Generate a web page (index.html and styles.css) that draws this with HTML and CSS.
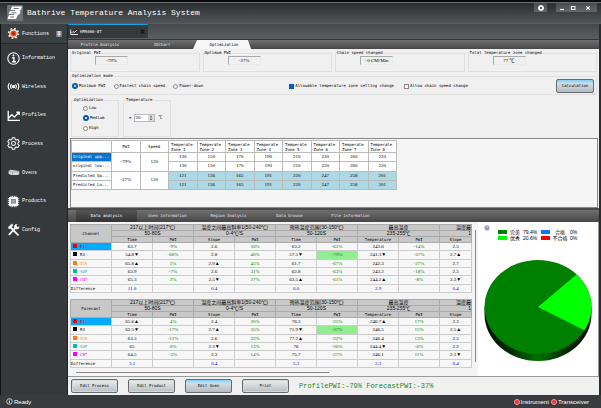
FILE: index.html
```html
<!DOCTYPE html>
<html lang="en">
<head>
  <meta charset="UTF-8">
  <meta name="viewport" content="width=device-width, initial-scale=1.0">
  <title>Bathrive Temperature Analysis System</title>
  <link rel="stylesheet" href="styles.css">
</head>
<body>
  <header class="titlebar">
    <svg class="logo" viewBox="0 0 16 16">
      <rect width="16" height="16" rx="1" fill="#6d7174"/>
      <path d="M5 1.500h10l-1 3.500h-1l-.5 1.500h1l-1 3h-1.500l-2 4.500H.5l1.500-4h5l.5-1H1.500L3 6h5l.5-1h-5z" fill="#fff"/>
      <path d="M6.500 3.500h5M4.500 7.800h5M3 12h4" stroke="#6b6f72" stroke-width="1"/>
    </svg>
    <h1>Bathrive Temperature Analysis System</h1>
    <div class="window-buttons">
      <button class="win settings" aria-label="Settings"><svg viewBox="0 0 8 8"><circle cx="4" cy="4" r="2" fill="none" stroke="#fff" stroke-width="1.6"/><path d="M4 1v6M1 4h6" stroke="#fff" stroke-width="1" stroke-dasharray="1 4"/></svg></button>
      <button class="win" aria-label="Minimize"><svg viewBox="0 0 8 8"><path d="M2 5.5h4" stroke="#fff" stroke-width="1.2"/></svg></button>
      <button class="win" aria-label="Maximize"><svg viewBox="0 0 8 8"><rect x="2.3" y="2.5" width="3.6" height="3" fill="none" stroke="#fff"/></svg></button>
      <button class="win close" aria-label="Close"><svg viewBox="0 0 8 8"><path d="M2.3 2.3l3.4 3.4M5.7 2.3L2.3 5.7" stroke="#fff" stroke-width="1.1"/></svg></button>
    </div>
  </header>

  <div class="workspace">
    <aside class="sidebar">
      <div class="functions">
        <svg class="icon" viewBox="0 0 16 16">
          <circle cx="8" cy="8" r="4.500" fill="#e8531c" stroke="#f3e6dc" stroke-width="1.500"/>
          <circle cx="8" cy="8" r="6" fill="none" stroke="#f3e6dc" stroke-width="2" stroke-dasharray="2.2 2.5"/>
          <circle cx="8" cy="8" r="2" fill="#b52b0c"/>
        </svg>
        <span>Functions</span>
        <button class="pin" aria-label="Pin"><svg viewBox="0 0 8 8"><path d="M2 1h4M3 1v3M5 1v3M1.500 4.500h5M4 4.500V8" fill="none" stroke="#fff" stroke-width="1.100"/></svg></button>
      </div>
      <nav class="menu">
        <a href="#information">
          <svg class="icon" viewBox="0 0 16 16" fill="none" stroke="#fff"><circle cx="8" cy="8" r="7" stroke-width="1.3"/><path d="M6.5 7H8.5V12M6 12h5" stroke-width="1.7"/><circle cx="8" cy="4.2" r="1.2" fill="#fff" stroke="none"/></svg>
          Information</a>
        <a href="#wireless">
          <svg class="icon" viewBox="0 0 16 16" fill="none" stroke="#fff" stroke-width="1.4"><circle cx="8" cy="8" r="1.4" fill="#fff"/><path d="M5.6 5.3a4 4 0 0 0 0 5.4M10.4 5.3a4 4 0 0 1 0 5.4M3 3.8a7 7 0 0 0 0 8.4M13 3.8a7 7 0 0 1 0 8.4"/></svg>
          Wireless</a>
        <a href="#profiles">
          <svg class="icon" viewBox="0 0 16 16" fill="none" stroke="#fff" stroke-width="1.6"><path d="M1.5 2v12H16M2 11l4-4 3 3 6-6M11.5 4H15v3.500"/></svg>
          Profiles</a>
        <a href="#process">
          <svg class="icon" viewBox="0 0 16 16" fill="none" stroke="#fff" stroke-width="1.3" stroke-linejoin="round"><path d="M6.500 1h3l.5 2 1.500.8 2-.6 1.500 2.600-1.500 1.400v1.600l1.500 1.400-1.500 2.600-2-.6-1.500.8-.5 2h-3L6 13l-1.500-.8-2 .6L1 10.200l1.500-1.400V7.200L1 5.800l1.500-2.600 2 .6L6 3z"/><circle cx="8" cy="8" r="2.400"/></svg>
          Process</a>
        <a href="#ovens">
          <svg class="icon" viewBox="0 0 16 16"><path d="M2 6l2-1.500 11 1.500v4l-2 1L5 11 2 9.500z" fill="#d9dadb"/><path d="M2 6.500l5 1v3.500M7 7.500l8-.5" fill="none" stroke="#8b8f91" stroke-width=".8"/></svg>
          Ovens</a>
        <a href="#products">
          <svg class="icon" viewBox="0 0 16 16" stroke="#fff"><path d="M5 1v14M7 1v14M9 1v14M11 1v14M1 4.500h14M1 7h14M1 9.500h14M1 12h14" stroke-width="1"/><rect x="3" y="3" width="10" height="10" fill="#fff"/><rect x="5.500" y="5.500" width="5" height="4.500" fill="#aaa" stroke="#777"/></svg>
          Products</a>
        <a href="#config">
          <svg class="icon" viewBox="0 0 16 16" fill="none" stroke="#fff" stroke-linecap="round"><path d="M5 6l8.500 8.500M11 5L3 14" stroke-width="2.200"/><path d="M1.500 5.500L5.500 1.500l2 1L4 7z" fill="#fff" stroke-width=".8"/><path d="M12 1.500a3 3 0 1 0 3 3l-2 .8-1.500-1.500z" fill="#fff" stroke-width=".6"/></svg>
          Config</a>
      </nav>
    </aside>

    <main class="document">
      <div class="doc-tabs">
        <div class="doc-tab">
          <svg viewBox="0 0 16 12" fill="none" stroke="#fff" stroke-width="1.800"><path d="M1.500 1v10H16M3 8l3-3 3 2 5-5"/></svg>
          <span>HM5060-8T</span>
          <button class="tab-close" aria-label="Close tab"><svg viewBox="0 0 8 8"><path d="M2 2l4 4M6 2L2 6" stroke="#111" stroke-width="1.400"/></svg></button>
        </div>
      </div>

      <div class="tabs top-tabs">
        <button>Profile Analysis</button>
        <button>3DChart</button>
        <button class="active">Optimization</button>
      </div>

      <section class="settings-panel">
        <div class="summary">
          <fieldset><legend>Original PWI</legend><output>-79%</output></fieldset>
          <fieldset><legend>Optimum PWI</legend><output>-37%</output></fieldset>
          <fieldset><legend>Chain speed changed</legend><output>+0 CM/Min</output></fieldset>
          <fieldset><legend>Total temperature zone changed</legend><output>77 ℃</output></fieldset>
        </div>

        <fieldset class="mode">
          <legend>Optimization mode</legend>
          <div class="mode-row">
            <div class="mode-radios">
              <label><input type="radio" name="mode" checked>Minimum PWI</label>
              <label><input type="radio" name="mode">Fastest chain speed</label>
              <label><input type="radio" name="mode">Power-down</label>
            </div>
            <div class="mode-checks">
              <label><input type="checkbox" checked>Allowable temperature zone setting change</label>
              <label><input type="checkbox">Allow chain speed change</label>
            </div>
            <button class="btn lit">Calculation</button>
          </div>
        </fieldset>

        <div class="options">
          <fieldset class="level">
            <legend>Optimization</legend>
            <label><input type="radio" name="level">Low</label>
            <label><input type="radio" name="level" checked>Medium</label>
            <label><input type="radio" name="level">High</label>
          </fieldset>
          <fieldset class="temperature">
            <legend>Temperature</legend>
            <label>± <span class="spin"><input type="text" value="20"><svg viewBox="0 0 6 8"><path d="M3 1l1.800 2H1.200zM3 7l1.800-2H1.200z" fill="#444"/></svg></span> ℃</label>
          </fieldset>
        </div>
      </section>

      <section class="zones-panel">
        <table class="zones">
          <colgroup><col class="name-col"></colgroup>
          <thead>
            <tr><th></th><th class="mid">PWI</th><th class="mid">Speed</th><th>Temperate Zone 1</th><th>Temperate Zone 2</th><th>Temperate Zone 3</th><th>Temperate Zone 4</th><th>Temperate Zone 5</th><th>Temperate Zone 6</th><th>Temperate Zone 7</th><th>Temperate Zone 8</th></tr>
          </thead>
          <tbody>
            <tr><th class="selected">Original upp...</th><td rowspan="2">-79%</td><td rowspan="2">120</td><td>130</td><td>150</td><td>170</td><td>190</td><td>210</td><td>230</td><td>260</td><td>220</td></tr>
            <tr><th>original low...</th><td>130</td><td>150</td><td>170</td><td>190</td><td>210</td><td>230</td><td>260</td><td>220</td></tr>
            <tr class="predicted"><th>Predicted Up...</th><td rowspan="2" class="plain">-37%</td><td rowspan="2" class="plain">120</td><td>121</td><td>136</td><td>165</td><td>191</td><td>220</td><td>247</td><td>258</td><td>201</td></tr>
            <tr class="predicted"><th>Predicted Lo...</th><td>121</td><td>136</td><td>165</td><td>191</td><td>220</td><td>247</td><td>258</td><td>201</td></tr>
          </tbody>
        </table>
      </section>

      <div class="tabs bottom-tabs">
        <button class="active">Data analysis</button>
        <button>Oven information</button>
        <button>Region Analysis</button>
        <button>Data browse</button>
        <button>File information</button>
      </div>

      <section class="results">
        <div class="tables">
          <div class="table-list">
            <table class="data">
              <colgroup><col span="9" class="value-col"><col></colgroup>
              <thead>
                <tr class="zh"><th rowspan="3" class="corner">Channel</th><th colspan="2">217以上时间(217℃)</th><th colspan="2">温度之间最高斜率1(50-240℃)</th><th colspan="2">预热温度范围(30-150℃)</th><th colspan="2">最高温度</th><th class="last">温度最</th></tr>
                <tr class="zh"><th colspan="2">50-80S</th><th colspan="2">0-4℃/S</th><th colspan="2">50-120S</th><th colspan="2">235-255℃</th><th class="last">1</th></tr>
                <tr><th>Time</th><th>PWI</th><th>Slope</th><th>PWI</th><th>Time</th><th>PWI</th><th>Temperature</th><th>PWI</th><th>Slope</th></tr>
              </thead>
              <tbody>
                <tr><th class="ch red current">B1</th><td>63.7</td><td class="pwi">-9%</td><td>2.6</td><td class="pwi">30%</td><td>63.2</td><td class="pwi">-62%</td><td>243.6</td><td class="pwi">-14%</td><td>2.5</td></tr>
                <tr><th class="ch black">R3</th><td>54.8▼</td><td class="pwi">-68%</td><td>2.8</td><td class="pwi">40%</td><td>57.5▼</td><td class="pwi best">-79%</td><td>241.3▼</td><td class="pwi">-37%</td><td>2.7▲</td></tr>
                <tr><th class="ch orange">IC5</th><td>65.8▲</td><td class="pwi">5%</td><td>2.9▲</td><td class="pwi">45%</td><td>61.7</td><td class="pwi">-67%</td><td>242.3</td><td class="pwi">-27%</td><td>2.7</td></tr>
                <tr><th class="ch teal">SOP</th><td>63.9</td><td class="pwi">-7%</td><td>2.6</td><td class="pwi">31%</td><td>62.8</td><td class="pwi">-63%</td><td>243.2</td><td class="pwi">-18%</td><td>2.5</td></tr>
                <tr><th class="ch magenta">CN7</th><td>65.3</td><td class="pwi">2%</td><td>2.5▼</td><td class="pwi">27%</td><td>63.5▲</td><td class="pwi">-61%</td><td>244.2▲</td><td class="pwi">-8%</td><td>2.3▼</td></tr>
                <tr class="diff"><th>Difference</th><td>11.0</td><td></td><td>0.4</td><td></td><td>6.0</td><td></td><td>2.9</td><td></td><td>0.4</td></tr>
              </tbody>
            </table>
            <table class="data">
              <colgroup><col span="9" class="value-col"><col></colgroup>
              <thead>
                <tr class="zh"><th rowspan="3" class="corner">Forecast</th><th colspan="2">217以上时间(217℃)</th><th colspan="2">温度之间最高斜率1(50-240℃)</th><th colspan="2">预热温度范围(30-150℃)</th><th colspan="2">最高温度</th><th class="last">温度最</th></tr>
                <tr class="zh"><th colspan="2">50-80S</th><th colspan="2">0-4℃/S</th><th colspan="2">50-120S</th><th colspan="2">235-255℃</th><th class="last">1</th></tr>
                <tr><th>Time</th><th>PWI</th><th>Slope</th><th>PWI</th><th>Time</th><th>PWI</th><th>Temperature</th><th>PWI</th><th>Slope</th></tr>
              </thead>
              <tbody>
                <tr><th class="ch red current">B1</th><td>65.6▲</td><td class="pwi">4%</td><td>2.4</td><td class="pwi">20%</td><td>76.3</td><td class="pwi">-25%</td><td>246.7▲</td><td class="pwi">17%</td><td>2.3</td></tr>
                <tr><th class="ch black">R3</th><td>62.5▼</td><td class="pwi">-17%</td><td>2.7▲</td><td class="pwi">35%</td><td>71.9▼</td><td class="pwi best">-37%</td><td>246.5</td><td class="pwi">15%</td><td>2.5▲</td></tr>
                <tr><th class="ch orange">IC5</th><td>63.3</td><td class="pwi">-11%</td><td>2.6</td><td class="pwi">32%</td><td>77.2▲</td><td class="pwi">-22%</td><td>246.4</td><td class="pwi">13%</td><td>2.5</td></tr>
                <tr><th class="ch teal">SOP</th><td>65</td><td class="pwi">0%</td><td>2.3▼</td><td class="pwi">13%</td><td>76</td><td class="pwi">-26%</td><td>244.4▼</td><td class="pwi">-6%</td><td>2.2</td></tr>
                <tr><th class="ch magenta">CN7</th><td>64.5</td><td class="pwi">-3%</td><td>2.3</td><td class="pwi">14%</td><td>75.7</td><td class="pwi">-27%</td><td>246.1</td><td class="pwi">11%</td><td>2.1▼</td></tr>
                <tr class="diff"><th>Difference</th><td>3.1</td><td></td><td>0.4</td><td></td><td>5.3</td><td></td><td>2.3</td><td></td><td>0.4</td></tr>
              </tbody>
            </table>
            <div class="hscroll"></div>
          </div>
          <div class="vscroll"></div>
        </div>

        <div class="chart">
          <div class="chart-head">
            <svg class="chart-tool" viewBox="0 0 8 8"><circle cx="4" cy="4" r="3" fill="#c4c8d8" stroke="#777d99"/><path d="M2.500 3.500L4 5l1.500-1.500" fill="none" stroke="#445"/></svg>
            <ul class="legend">
              <li><i class="excellent"></i><span>完美</span><b>79.4%</b></li>
              <li><i class="pass"></i><span>合格</span><b>0%</b></li>
              <li><i class="good"></i><span>优秀</span><b>20.6%</b></li>
              <li><i class="fail"></i><span>不合格</span><b>0%</b></li>
            </ul>
          </div>
          <svg class="pie" viewBox="0 0 108 102">
            <defs>
              <linearGradient id="side">
                <stop offset="0" stop-color="#001000"/>
                <stop offset=".25" stop-color="#012c01"/>
                <stop offset=".5" stop-color="#007000"/>
                <stop offset=".75" stop-color="#012c01"/>
                <stop offset="1" stop-color="#001000"/>
              </linearGradient>
            </defs>
            <path d="M.5 47v7a53.500 47 0 0 0 107 0v-7z" fill="url(#side)"/>
            <ellipse cx="54" cy="47" rx="53.500" ry="47" fill="#008000"/>
            <path d="M54 47L92.500 14.500A53.500 47 0 0 1 100.500 70.300z" fill="#0f0"/>
          </svg>
        </div>
      </section>

      <footer class="actions">
        <button class="btn">Edit Process</button>
        <button class="btn">Edit Product</button>
        <button class="btn lit">Edit Oven</button>
        <button class="btn">Print</button>
        <p>ProfilePWI:-79% ForecastPWI:-37%</p>
      </footer>
    </main>
  </div>

  <div class="statusbar">
    <span class="ready"><svg viewBox="0 0 8 8"><circle cx="4" cy="4" r="3.200" fill="none" stroke="#fff" stroke-width=".8"/><path d="M4 3.500V6M4 2v.8" stroke="#fff"/></svg>Ready</span>
    <span class="device"><i></i>Instrument</span>
    <span class="device"><i></i>Transceiver</span>
  </div>
</body>
</html>
```
FILE: styles.css
```css
* {
  box-sizing: border-box;
}

body {
  margin: 0;
  min-height: 100vh;
  display: flex;
  flex-direction: column;
  background: #3a3b3f;
  border-top: 2px solid #0b0b0b;
  font-family: "DejaVu Sans Mono", "Noto Sans CJK SC", monospace;
  font-size: 4px;
  line-height: 6px;
  color: #000;
}

button,
input,
output {
  font: inherit;
  color: inherit;
}

button {
  border: none;
  padding: 0;
  background: none;
}

svg {
  display: block;
}

/* title bar */
.titlebar {
  display: flex;
  align-items: center;
  height: 22px;
  padding-left: 7px;
  background: linear-gradient(#2a2d2f, #50565a);
  border-top: 1px solid #6b6e70;
  border-bottom: 1px solid #1c6f96;
}

.logo {
  width: 16px;
  height: 16px;
}

.titlebar h1 {
  margin: 0 0 0 4px;
  font-family: "Liberation Mono", monospace;
  font-size: 8px;
  line-height: 12px;
  font-weight: normal;
  color: #fff;
}

.window-buttons {
  display: flex;
  align-self: flex-start;
  margin: 0 4px 0 auto;
}

.win {
  width: 11px;
  height: 9px;
  display: flex;
  align-items: center;
  justify-content: center;
  background: linear-gradient(#4a4a4b, #666);
}

.win svg {
  width: 8px;
  height: 8px;
}

.win.settings {
  width: 13px;
  margin-right: 9px;
}

.win.close {
  width: 19px;
}

.workspace {
  flex: 1;
  display: flex;
}

/* sidebar */
.sidebar {
  flex: 0 0 68px;
  border-left: 1px solid #111;
  border-right: 1px solid #222;
  background: #35393c;
  color: #fff;
  font-family: "Liberation Mono", monospace;
  font-size: 5px;
}

.functions {
  display: flex;
  align-items: center;
  height: 20px;
  padding: 0 5px 0 6px;
  gap: 2px;
  background: #3a3f42;
  border-bottom: 1px solid #26292b;
}

.icon {
  width: 13px;
  height: 13px;
}

.pin {
  width: 6px;
  height: 6px;
  margin-left: auto;
  background: #777;
}

.menu {
  display: grid;
  grid-template-rows: repeat(7, 1fr);
  height: 200px;
}

.menu a {
  display: flex;
  align-items: center;
  gap: 2px;
  padding-left: 6px;
  color: #fff;
  text-decoration: none;
}

/* document area */
.document {
  flex: 1;
  min-width: 0;
  display: flex;
  flex-direction: column;
  border-right: 2px solid #2b2c30;
  background: #f0f0f0;
}

.doc-tabs {
  height: 16px;
  background: linear-gradient(#45494c, #5a5f62);
  border-bottom: 1px solid #333;
}

.doc-tab {
  display: flex;
  align-items: center;
  gap: 2px;
  width: 80px;
  height: 14px;
  padding: 0 2px;
  background: #35393c;
  border-top: 1px solid #13a0e0;
  color: #fff;
}

.doc-tab > svg {
  width: 8px;
  height: 6px;
}

.tab-close {
  margin-left: auto;
}

.tab-close svg {
  width: 7px;
  height: 7px;
}

.tabs {
  display: flex;
  background: linear-gradient(#707070, #464646);
  color: #e4e4e4;
}

.top-tabs {
  height: 9px;
  padding-left: 1px;
}

.top-tabs button {
  flex: 0 0 62px;
}

.top-tabs .active {
  color: #000;
  background: #f6f6f6;
  clip-path: polygon(4px 0, 55px 0, 58px 100%, 0 100%);
}

.settings-panel {
  padding: 1px 2px 1px;
}

fieldset {
  min-width: 0;
  margin: 0;
  padding: 0;
  border: 1px solid #e0e0e0;
}

legend {
  margin-left: 1px;
  padding: 0;
}

.summary {
  display: grid;
  grid-template-columns: repeat(4, 1fr);
  gap: 3px;
}

.summary fieldset {
  height: 22px;
}

.summary output {
  display: block;
  width: 33px;
  height: 9px;
  margin-left: 24px;
  line-height: 8px;
  text-align: center;
  border: 1px solid #e8e8e8;
  border-top-color: #aaa;
  border-left-color: #aaa;
}

.mode {
  margin-top: 1px;
  height: 22px;
}

.mode-row {
  display: flex;
  align-items: center;
}

label {
  display: flex;
  align-items: center;
  gap: 1px;
  white-space: nowrap;
}

input[type="radio"],
input[type="checkbox"] {
  appearance: none;
  flex: none;
  width: 5px;
  height: 5px;
  margin: 0;
  background: #fff;
  border: 1px solid #888;
}

input[type="radio"] {
  border-radius: 50%;
}

input[type="radio"]:checked {
  width: 6px;
  height: 6px;
  border: 2px solid #0058b8;
}

input[type="checkbox"]:checked {
  background: #0a62c4;
  border-color: #0058b8;
}

.mode-radios {
  display: flex;
  gap: 8px;
  padding-left: 1px;
  flex: 0 0 41%;
}

.mode-checks {
  display: flex;
  gap: 10px;
  padding-left: 3px;
}

.btn {
  border: 1px solid #666b70;
  border-radius: 2px;
  background: linear-gradient(#eceeef, #b9bec2);
  box-shadow: inset 0 0 0 1px #d4d8db;
}

.btn.lit {
  background: linear-gradient(#7fd0f8, #d4dde2 30%, #b4bcc1);
  box-shadow: none;
}

.mode .btn {
  width: 38px;
  height: 14px;
  margin-left: auto;
  margin-right: 2px;
}

.options {
  display: flex;
  gap: 4px;
  margin-top: 2px;
  padding-left: 1px;
}

.options fieldset {
  width: 48px;
  height: 40px;
}

.options legend {
  margin-left: 2px;
}

.level label {
  height: 10px;
  padding-left: 11px;
}

.temperature label {
  gap: 3px;
  height: 30px;
  padding-left: 5px;
}

.spin {
  display: flex;
  align-items: center;
  width: 21px;
  height: 8px;
  background: #fff;
  border: 1px solid #bbb;
}

.spin input {
  flex: 1;
  min-width: 0;
  padding: 0;
  height: 6px;
  border: none;
  background: none;
}

.spin svg {
  width: 6px;
  height: 6px;
  background: #ddd;
}

/* oven zones */
.zones-panel {
  height: 70px;
  margin: 0 1px 0 2px;
  padding-top: 1px;
  background: #f5f5f5;
  border: 1px solid #888;
}

table {
  table-layout: fixed;
  border-collapse: collapse;
}

th,
td {
  padding: 0;
  font-weight: normal;
  text-align: center;
  white-space: nowrap;
}

td,
output,
.spin input {
  font-family: "Liberation Serif", "Noto Sans CJK SC", serif;
  font-size: 5px;
}

.zones {
  width: 62%;
  height: 50px;
  background: #fff;
}

.name-col {
  width: 40px;
}

.zones td,
.zones th {
  border: 1px solid #bbb;
}

.zones thead th {
  height: 12px;
  padding: 0 2px;
  line-height: 5px;
  text-align: left;
  white-space: normal;
}

.zones thead .mid {
  text-align: center;
}

.zones tbody th {
  padding-left: 1px;
  text-align: left;
}

.zones .selected {
  background: #0872cf;
  color: #fff;
}

.predicted td {
  background: #add8e6;
}

.predicted .plain {
  background: #fff;
}

/* lower tabs and results */
.bottom-tabs {
  height: 14px;
  padding-left: 8px;
  border-top: 2px solid #4a4a4a;
}

.bottom-tabs button {
  flex: 0 0 61px;
}

.bottom-tabs .active {
  color: #fff;
  background: linear-gradient(#555, #333);
}

.results {
  display: flex;
  border-bottom: 1px solid #999;
  background: #f4f4f4;
}

.tables {
  flex: 1;
  min-width: 0;
  display: flex;
  padding: 2px;
  gap: 3px;
}

.table-list {
  flex: 1;
  min-width: 0;
}

.data {
  width: 100%;
  height: 69px;
  margin-bottom: 6px;
  background: #f7f7f7;
  border: 1px solid #999;
}

.value-col {
  width: 41px;
}

.data th,
.data td {
  border: 1px solid #ccc;
  line-height: 5px;
}

.data thead th {
  background: #c8c8c8;
  border-color: #aaa;
}

.data .zh th:not(.corner) {
  font-family: "Liberation Sans", "Noto Sans CJK SC", sans-serif;
  font-size: 5px;
}

.data .zh .last {
  text-align: right;
}

.data tbody th {
  text-align: left;
}

.data .ch::before {
  content: "";
  display: inline-block;
  width: 4px;
  height: 4px;
  margin: 0 3px 0 2px;
  background: currentColor;
}

.red { color: #e00; }
.black { color: #000; }
.orange { color: #ff7a1a; }
.teal { color: #0bb; }
.magenta { color: #f0f; }

.data .current {
  background: #00aaff;
}

.pwi {
  color: #008000;
}

.data .best {
  background: #90ee90;
}

.diff td {
  color: #00f;
}

.hscroll {
  width: 63%;
  height: 1px;
  margin: -2px 0 1px 6px;
  background: #888;
}

.vscroll {
  width: 1px;
  margin: 6px 0 12px;
  background: #888;
}

.chart {
  flex: 0 0 121px;
  padding: 3px 6px 10px;
  background: #fff;
  border-right: 1px solid #999;
}

.chart-head {
  display: flex;
  gap: 8px;
}

.chart-tool {
  width: 6px;
  height: 6px;
}

.legend {
  flex: 1;
  display: grid;
  grid-template-columns: 43px 1fr;
  margin: 4px 0 0;
  padding: 0;
  list-style: none;
  font-family: "Liberation Sans", "Noto Sans CJK SC", sans-serif;
  font-size: 5px;
}

.legend li {
  display: flex;
  align-items: center;
  height: 6px;
}

.legend i {
  width: 9px;
  height: 4px;
}

.legend span {
  width: 16px;
  text-align: center;
}

.legend li:nth-child(even) span {
  width: 20px;
}

.legend b {
  font-weight: normal;
}

.excellent { background: #008000; }
.pass { background: #0a78ff; }
.good { background: #0f0; }
.fail { background: #f00; }

.pie {
  width: 100%;
  margin-top: 19px;
}

.actions {
  display: flex;
  align-items: center;
  gap: 10px;
  padding: 2px 3px;
}

.actions .btn {
  width: 47px;
  height: 14px;
}

.actions p {
  margin: 0;
  font-family: "Liberation Mono", monospace;
  font-size: 7px;
  line-height: 10px;
  color: #228b22;
}

.statusbar {
  display: flex;
  align-items: center;
  gap: 2px;
  height: 13px;
  padding: 0 12px 0 6px;
  color: #fff;
  font-family: "Liberation Sans", sans-serif;
  font-size: 6px;
}

.statusbar span {
  display: flex;
  align-items: center;
  gap: 1px;
}

.ready {
  margin-right: auto;
}

.ready svg {
  width: 7px;
  height: 7px;
}

.device i {
  width: 6px;
  height: 6px;
  border-radius: 50%;
  background: #e33;
  border: 1px solid #f99;
}
```
